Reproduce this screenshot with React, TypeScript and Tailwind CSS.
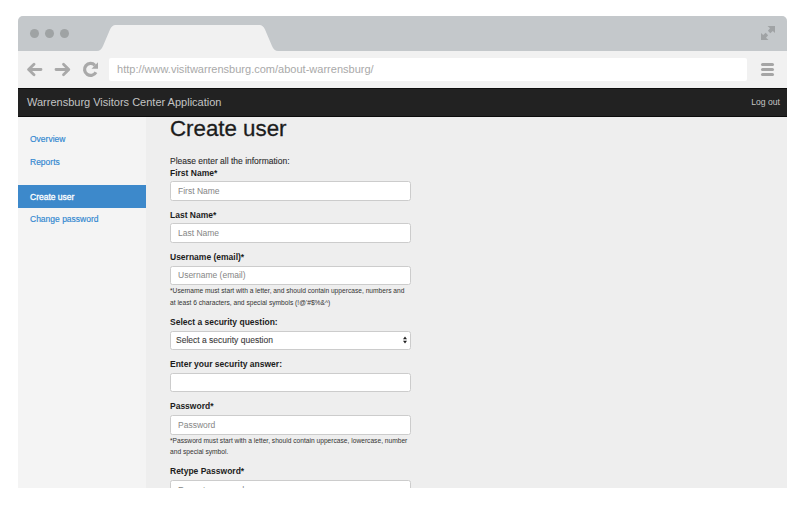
import type { ReactNode } from "react";

function TitleBar() {
  return (
    <div className="relative flex h-[35px] items-center justify-between bg-[#c4c8cb] pr-[11px] pl-3">
      <svg className="absolute top-[9px] left-[79px]" width="181" height="26" viewBox="0 0 181 26">
        <path d="M0 26 Q4 26 6 21 L13 4.500 Q15 0 18.500 0 H162.500 Q166 0 168 4.500 L175 21 Q177 26 181 26 Z" fill="#f1f1f1" />
      </svg>
      <div className="flex gap-[6px]">
        <span className="size-[9px] rounded-full bg-[#9fa3a4]" />
        <span className="size-[9px] rounded-full bg-[#9fa3a4]" />
        <span className="size-[9px] rounded-full bg-[#9fa3a4]" />
      </div>
      <svg className="-mt-px" width="16" height="16" viewBox="0 0 16 16" fill="#a0a3a5">
        <path d="M7.500 1H15V8L12.800 5.900L10.300 8.200L7.900 5.800L10 3.300Z M8.500 15H1V8L3.200 10.100L5.700 7.800L8.100 10.200L6 12.700Z" />
      </svg>
    </div>
  );
}

function Toolbar() {
  return (
    <div className="flex h-[37px] items-center bg-[#f1f1f1] pr-3 pl-[9px]">
      <svg width="73" height="17" viewBox="0 0 73 17" fill="none" stroke="#a9a9a9" strokeWidth="2.800" strokeLinecap="round" strokeLinejoin="round">
        <path d="M14 8.500H2M7 3.200L1.600 8.500L7 13.800" />
        <path d="M29 8.500H41.500M36.500 3.200L41.800 8.500L36.500 13.800" />
        <path d="M67.900 4.300A6 6 0 1 0 68.900 11.200" strokeWidth="3.200" strokeLinecap="butt" />
        <path d="M71 1.300V7.800H64.500Z" fill="#a9a9a9" stroke="none" />
      </svg>
      <div className="ml-[9px] flex h-[23px] w-[638px] items-center rounded-[2px] bg-white pl-2 text-[11px] tracking-[0.01px] text-[#a9a9a9]">
        http://www.visitwarrensburg.com/about-warrensburg/
      </div>
      <div className="ml-[14px] flex flex-col gap-[2px]">
        <span className="h-[3px] w-[13px] rounded-full bg-[#a5a5a5]" />
        <span className="h-[3px] w-[13px] rounded-full bg-[#a5a5a5]" />
        <span className="h-[3px] w-[13px] rounded-full bg-[#a5a5a5]" />
      </div>
    </div>
  );
}

function NavItem({ children, active }: { children: ReactNode; active?: boolean }) {
  return (
    <a className={`flex h-[23px] items-center pl-3 text-[8.500px] ${active ? "bg-[#3d89cb] pt-px text-white [-webkit-text-stroke:0.3px]" : "text-[#2f86d0] [-webkit-text-stroke:0.15px]"}`}>
      {children}
    </a>
  );
}

function Field({ label, placeholder, help, select }: { label: string; placeholder?: string; help?: string[]; select?: boolean }) {
  return (
    <div className="mb-[8.300px]">
      <label className="mb-[2.500px] block h-[11.700px] pt-[0.500px] text-[8.500px] leading-[11.400px] font-bold text-[#1c1c1c]">{label}</label>
      {select ? (
        <div className="flex h-[19.700px] items-center justify-between rounded-[2.500px] border border-[#ccc] bg-white pr-[3px] pl-[5px] text-[8.500px] text-[#3c3c3c] [-webkit-text-stroke:0.1px]">
          {placeholder}
          <svg width="4" height="8" viewBox="0 0 4 8" fill="#222">
            <path d="M0 3.200L2 0.500L4 3.200ZM0 4.800L2 7.500L4 4.800Z" />
          </svg>
        </div>
      ) : (
        <input
          className="block h-[19.700px] w-full rounded-[2.500px] border border-[#ccc] bg-white px-[7px] text-[8.500px] text-[#444] placeholder:text-[#858585]"
          placeholder={placeholder}
        />
      )}
      {help && (
        <p className="text-[6.650px] leading-[11.400px] whitespace-nowrap text-[#333]">
          {help[0]}
          <br />
          {help[1]}
        </p>
      )}
    </div>
  );
}

export default function App() {
  return (
    <div className="h-[524px] w-[804px] overflow-hidden bg-white pt-4 pl-[18px] font-['Liberation_Sans',Arial,sans-serif]">
      <div className="flex h-[472px] w-[769px] flex-col overflow-hidden rounded-t-[5px] bg-[#eee]">
        <TitleBar />
        <Toolbar />
        <header className="flex h-[29px] shrink-0 items-center justify-between border-t border-b border-[#0c0c0c] bg-[#222] pr-[7px] pl-[9px] text-[#c4c4c4]">
          <span className="text-[11px]">Warrensburg Visitors Center Application</span>
          <span className="text-[8.600px]">Log out</span>
        </header>
        <div className="flex min-h-0 flex-1">
          <nav className="w-32 shrink-0 bg-[#f4f4f4] pt-[11px]">
            <NavItem>Overview</NavItem>
            <NavItem>Reports</NavItem>
            <div className="h-[11px]" />
            <NavItem active>Create user</NavItem>
            <NavItem>Change password</NavItem>
          </nav>
          <main className="ml-6 w-[241px]">
            <h1 className="h-[38.700px] text-[22.300px] leading-[23px] text-[#1c1c1c] [-webkit-text-stroke:0.3px]">Create user</h1>
            <p className="h-[11.400px] text-[8.500px] leading-[11.400px] text-[#2c2c2c] [-webkit-text-stroke:0.1px]">Please enter all the information:</p>
            <Field label="First Name*" placeholder="First Name" />
            <Field label="Last Name*" placeholder="Last Name" />
            <Field
              label="Username (email)*"
              placeholder="Username (email)"
              help={["*Username must start with a letter, and should contain uppercase, numbers and", "at least 6 characters, and special symbols (!@'#$%&^)"]}
            />
            <Field label="Select a security question:" placeholder="Select a security question" select />
            <Field label="Enter your security answer:" />
            <Field
              label="Password*"
              placeholder="Password"
              help={["*Password must start with a letter, should contain uppercase, lowercase, number", "and special symbol."]}
            />
            <Field label="Retype Password*" placeholder="Repeat password" />
          </main>
        </div>
      </div>
    </div>
  );
}
